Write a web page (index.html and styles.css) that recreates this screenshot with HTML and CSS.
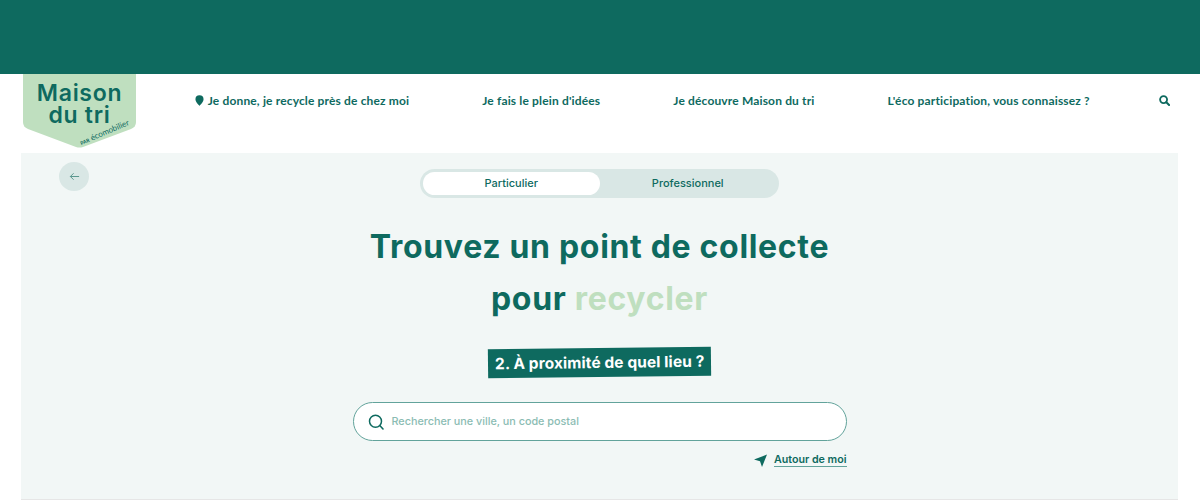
FILE: index.html
```html
<!DOCTYPE html>
<html lang="fr">
<head>
    <meta charset="UTF-8">
    <meta name="viewport" content="width=device-width, initial-scale=1.0">
    <title>Maison du tri</title>
    <link rel="stylesheet" href="styles.css">
</head>
<body>

    <div class="top-band"></div>

    <header class="site-header">
        <a class="logo" href="#">
            <svg class="logo-shape" viewBox="0 0 113 74" width="113" height="74" aria-hidden="true">
                <path d="M0 0H113V48Q113 53 108 55L60 73Q56.500 74 53 73L5 55Q0 53 0 48Z" fill="#bfdfbf"/>
            </svg>
            <span class="logo-name">Maison<br>du tri</span>
            <span class="logo-by"><small>PAR</small> écomobilier</span>
        </a>
        <nav class="main-nav">
            <a href="#" class="nav-first">
                <svg viewBox="0 0 10 12" width="9" height="11" aria-hidden="true">
                    <path d="M5 12C4 10.500 0.500 8 0.500 4.700A4.500 4.500 0 0 1 9.500 4.700C9.500 8 6 10.500 5 12Z" fill="#0e6a5f"/>
                </svg>
                Je donne, je recycle près de chez moi
            </a>
            <a href="#">Je fais le plein d'idées</a>
            <a href="#">Je découvre Maison du tri</a>
            <a href="#">L'éco participation, vous connaissez ?</a>
        </nav>
        <a class="nav-search" href="#">
            <svg viewBox="0 0 12 12" width="11" height="11" aria-hidden="true">
                <circle cx="5" cy="5" r="3.800" fill="none" stroke="#0e6a5f" stroke-width="2"/>
                <path d="M8 8L11 11" stroke="#0e6a5f" stroke-width="2.200" stroke-linecap="round"/>
            </svg>
        </a>
    </header>

    <main class="panel">
        <button class="back-button" aria-label="Retour">
            <svg viewBox="0 0 12 12" width="11" height="11" aria-hidden="true">
                <path d="M11 6H1.500M5 2.500L1.500 6L5 9.500" fill="none" stroke="#4f8f87" stroke-width="1"/>
            </svg>
        </button>

        <div class="switch">
            <span class="switch-option active">Particulier</span>
            <span class="switch-option">Professionnel</span>
        </div>

        <h1>Trouvez un point de collecte<br>pour <em>recycler</em></h1>

        <h2><span>2. À proximité de quel lieu ?</span></h2>

        <div class="search-zone">
            <div class="search-box">
                <svg viewBox="0 0 16 16" width="16" height="16" aria-hidden="true">
                    <circle cx="7.500" cy="7.300" r="6" fill="none" stroke="#0e6a5f" stroke-width="1.500"/>
                    <path d="M12 11.800L15 15" stroke="#0e6a5f" stroke-width="1.600" stroke-linecap="round"/>
                </svg>
                <span>Rechercher une ville, un code postal</span>
            </div>
            <a class="around-me" href="#">
                <svg viewBox="0 0 13 13" width="13" height="13" aria-hidden="true">
                    <path d="M13 0.500L8 13L6 7.300L0 5.500Z" fill="#0e6a5f"/>
                </svg>
                <span>Autour de moi</span>
            </a>
        </div>
    </main>

</body>
</html>
```

FILE: styles.css
```css
/* Page */
html, body {
    height: 500px;
    overflow: hidden;
}

body {
    margin: 0;
    background-color: #fff;
    font-family: "Lato", Arial, sans-serif;
    color: #0e6a5f;
}

a {
    color: inherit;
    text-decoration: none;
}

.top-band {
    height: 74px;
    background-color: #0e6a5f;
}

/* Header */
.site-header {
    display: flex;
    align-items: flex-start;
    height: 79px;
    padding-left: 23px;
}

.logo {
    position: relative;
    display: block;
    width: 113px;
    height: 74px;
    flex-shrink: 0;
}

.logo-shape {
    display: block;
}

.logo-name {
    position: absolute;
    top: 9px;
    left: 0;
    width: 100%;
    font-family: "Inter", Arial, sans-serif;
    font-size: 23px;
    font-weight: 600;
    line-height: 21.500px;
    letter-spacing: 0.700px;
    text-align: center;
}

.logo-by {
    position: absolute;
    left: 59px;
    top: 64px;
    font-size: 8px;
    font-weight: 400;
    white-space: nowrap;
    transform: rotate(-23deg);
    transform-origin: left bottom;
    line-height: 8px;
}

.logo-by small {
    font-size: 5px;
    font-weight: 700;
}

.main-nav {
    display: flex;
    gap: 73px;
    margin-left: 59px;
    margin-top: 19px;
    font-size: 12px;
    font-weight: 700;
    line-height: 15px;
    letter-spacing: 0.150px;
    white-space: nowrap;
}

.nav-first svg {
    margin-right: 1px;
    vertical-align: -1px;
}

.nav-search {
    margin-left: 69px;
    margin-top: 21px;
    line-height: 0;
}

/* Main panel */
.panel {
    position: relative;
    display: flex;
    flex-direction: column;
    align-items: center;
    height: 346px;
    margin: 0 22px 0 21px;
    background-color: #f2f7f6;
    border-bottom: 1px solid #e6e6e6;
    text-align: center;
}

.back-button {
    position: absolute;
    top: 9px;
    left: 38px;
    display: flex;
    align-items: center;
    justify-content: center;
    width: 30px;
    height: 29px;
    padding: 0;
    border: none;
    border-radius: 50%;
    background-color: #d9e7e5;
}

.switch {
    display: flex;
    width: 353px;
    height: 23px;
    margin-top: 16px;
    padding: 3px;
    border-radius: 15px;
    background-color: #d9e7e5;
}

.switch-option {
    width: 50%;
    border-radius: 12px;
    font-family: "Inter", Arial, sans-serif;
    font-size: 11px;
    font-weight: 500;
    line-height: 23px;
}

.switch-option.active {
    background-color: #fff;
}

h1 {
    margin: 23px 0 0;
    font-family: "Inter", Arial, sans-serif;
    font-size: 32px;
    font-weight: 700;
    line-height: 52px;
    letter-spacing: 0.680px;
}

h1 em {
    color: #bfdfbf;
    font-style: normal;
}

h2 {
    margin: 23px 0 0;
    padding: 5px 7px 5px 7px;
    background-color: #0e6a5f;
    color: #fff;
    font-family: "Inter", Arial, sans-serif;
    font-size: 15.500px;
    font-weight: 700;
    line-height: 19px;
    letter-spacing: 0.080px;
    transform: rotate(-0.700deg);
}

.search-zone {
    display: flex;
    flex-direction: column;
    align-items: flex-end;
    width: 494px;
    margin-top: 25px;
}

.search-box {
    display: flex;
    align-items: center;
    gap: 8px;
    box-sizing: border-box;
    width: 100%;
    height: 39px;
    padding-left: 14px;
    border: 1px solid #62a39b;
    border-radius: 20px;
    background-color: #fff;
    color: #8bbcb3;
    font-family: "Inter", Arial, sans-serif;
    font-size: 10.800px;
    font-weight: 500;
}

.around-me {
    display: flex;
    align-items: center;
    gap: 7px;
    margin-top: 12px;
    font-family: "Inter", Arial, sans-serif;
    font-size: 10.700px;
    font-weight: 600;
}

.around-me span {
    border-bottom: 1px solid #62a39b;
}
```
